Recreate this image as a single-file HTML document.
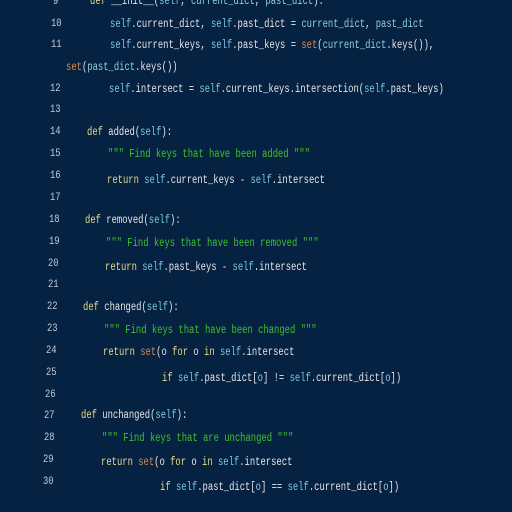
<!DOCTYPE html><html><head><style>
body{margin:0;width:512px;height:512px;background:#062243;overflow:hidden;position:relative;font-family:"Liberation Mono",monospace;font-size:11.5px;color:#e6e6e6}
.l{position:absolute;white-space:pre;line-height:14px;transform:scaleX(0.77);transform-origin:0 0}
.n{position:absolute;color:#c4ccd6;font-size:11px;line-height:14px;transform:scaleX(0.8);transform-origin:0 0}
.k{color:#e8d98a}.s{color:#7cc8d8}.o{color:#d9894f}.g{color:#3fc02a}.c{color:#8fd0e0}
</style></head><body>
<div class="n" style="left:53px;top:-5px">9</div><div class="l" style="left:90px;top:-5px"><span class="k">def</span> __init__(<span class="s">self</span>, <span class="c">current_dict</span>, <span class="c">past_dict</span>):</div>
<div class="n" style="left:51px;top:17px">10</div><div class="l" style="left:110px;top:18px"><span class="s">self</span>.current_dict, <span class="s">self</span>.past_dict = <span class="c">current_dict</span>, <span class="c">past_dict</span></div>
<div class="n" style="left:51px;top:38px">11</div><div class="l" style="left:110px;top:39px"><span class="s">self</span>.current_keys, <span class="s">self</span>.past_keys = <span class="o">set</span>(<span class="c">current_dict</span>.keys()),</div>
<div class="l" style="left:66px;top:61px"><span class="o">set</span>(<span class="c">past_dict</span>.keys())</div>
<div class="n" style="left:50px;top:82px">12</div><div class="l" style="left:109px;top:83px"><span class="s">self</span>.intersect = <span class="s">self</span>.current_keys.intersection(<span class="s">self</span>.past_keys)</div>
<div class="n" style="left:50px;top:103px">13</div>
<div class="n" style="left:50px;top:125px">14</div><div class="l" style="left:87px;top:126px"><span class="k">def</span> added(<span class="s">self</span>):</div>
<div class="n" style="left:50px;top:147px">15</div><div class="l" style="left:108px;top:148px"><span class="g">""" Find keys that have been added """</span></div>
<div class="n" style="left:50px;top:169px">16</div><div class="l" style="left:107px;top:174px"><span class="k">return</span> <span class="s">self</span>.current_keys - <span class="s">self</span>.intersect</div>
<div class="n" style="left:50px;top:191px">17</div>
<div class="n" style="left:49px;top:213px">18</div><div class="l" style="left:85px;top:214px"><span class="k">def</span> removed(<span class="s">self</span>):</div>
<div class="n" style="left:49px;top:235px">19</div><div class="l" style="left:106px;top:237px"><span class="g">""" Find keys that have been removed """</span></div>
<div class="n" style="left:48px;top:257px">20</div><div class="l" style="left:105px;top:261px"><span class="k">return</span> <span class="s">self</span>.past_keys - <span class="s">self</span>.intersect</div>
<div class="n" style="left:48px;top:278px">21</div>
<div class="n" style="left:47px;top:300px">22</div><div class="l" style="left:83px;top:301px"><span class="k">def</span> changed(<span class="s">self</span>):</div>
<div class="n" style="left:47px;top:322px">23</div><div class="l" style="left:104px;top:324px"><span class="g">""" Find keys that have been changed """</span></div>
<div class="n" style="left:46px;top:344px">24</div><div class="l" style="left:103px;top:346px"><span class="k">return</span> <span class="o">set</span>(o <span class="k">for</span> o <span class="k">in</span> <span class="s">self</span>.intersect</div>
<div class="n" style="left:46px;top:366px">25</div><div class="l" style="left:162px;top:372px"><span class="k">if</span> <span class="s">self</span>.past_dict[<span class="c">o</span>] != <span class="s">self</span>.current_dict[<span class="c">o</span>])</div>
<div class="n" style="left:45px;top:388px">26</div>
<div class="n" style="left:44px;top:409px">27</div><div class="l" style="left:81px;top:409px"><span class="k">def</span> unchanged(<span class="s">self</span>):</div>
<div class="n" style="left:44px;top:431px">28</div><div class="l" style="left:102px;top:432px"><span class="g">""" Find keys that are unchanged """</span></div>
<div class="n" style="left:43px;top:453px">29</div><div class="l" style="left:101px;top:456px"><span class="k">return</span> <span class="o">set</span>(o <span class="k">for</span> o <span class="k">in</span> <span class="s">self</span>.intersect</div>
<div class="n" style="left:43px;top:475px">30</div><div class="l" style="left:160px;top:481px"><span class="k">if</span> <span class="s">self</span>.past_dict[<span class="c">o</span>] == <span class="s">self</span>.current_dict[<span class="c">o</span>])</div>
</body></html>
